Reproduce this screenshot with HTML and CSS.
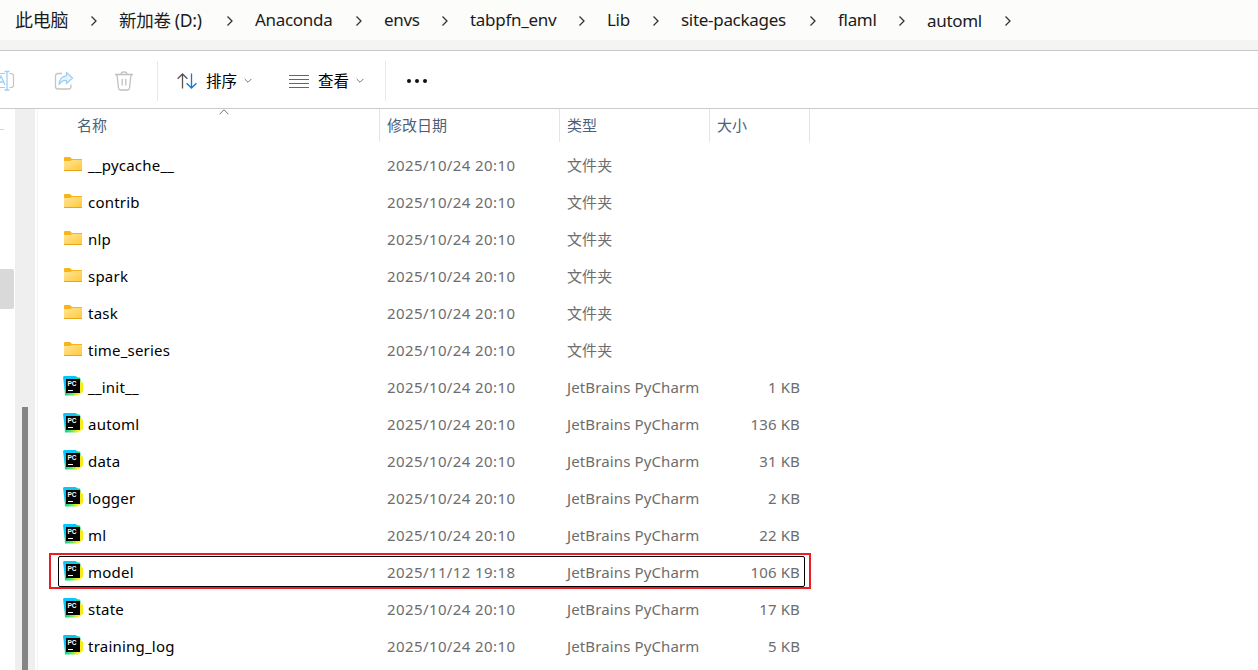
FILE: index.html
```html
<!DOCTYPE html>
<html lang="zh-CN">
<head>
    <meta charset="UTF-8">
    <title>automl</title>
    <link rel="stylesheet" href="styles.css">
</head>
<body>

<!-- 图标 -->
<svg class="sprite">
    <defs>
        <linearGradient id="folder-fill" x1="0" y1="0" x2="1" y2="1">
            <stop offset="0" stop-color="#ffe59b"/>
            <stop offset="1" stop-color="#ffc937"/>
        </linearGradient>
        <linearGradient id="pc-fill" x1="0" y1="1" x2="1" y2=".7">
            <stop offset=".1" stop-color="#10d98c"/>
            <stop offset=".4" stop-color="#6be860"/>
            <stop offset=".65" stop-color="#f6ee1c"/>
        </linearGradient>
    </defs>
    <symbol id="folder" viewBox="0 0 18 14">
        <path d="M0 1Q0 0 1 0H6L8 2H18V6H0Z" fill="#f9b517"/>
        <path d="M0 4H6.5L8 3H18V14H0Z" fill="url(#folder-fill)"/>
        <path d="M0 13.5H18" stroke="#e9a61c"/>
    </symbol>
    <symbol id="pycharm" viewBox="0 0 20 20">
        <path d="M0 1L1 0H12.500L17 3V12L4 17L1.500 13Z" fill="#0cc5f8"/>
        <path d="M12.500 1.500H17L18 6H12Z" fill="#12d99a"/>
        <path d="M1.500 12.500L2 19.500H15L20 16V7L17.500 5Z" fill="url(#pc-fill)"/>
        <path d="M3 3H17V17H3Z"/>
        <path d="M5 14.500H10" stroke="#fff"/>
    </symbol>
    <symbol id="chevron" viewBox="0 0 8 12">
        <path d="M1.500 1.500L6 6L1.500 10.500" fill="none" stroke="#333" stroke-width="1.300"/>
    </symbol>
    <symbol id="down" viewBox="0 0 8 6">
        <path d="M.7 1L4 4.300L7.300 1" fill="none" stroke="#777"/>
    </symbol>
</svg>

<div class="address">
    <span class="crumb c1">此电脑</span><svg class="sep"><use href="#chevron"/></svg>
    <span class="crumb c2">新加卷 (D:)</span><svg class="sep"><use href="#chevron"/></svg>
    <span class="crumb c3">Anaconda</span><svg class="sep"><use href="#chevron"/></svg>
    <span class="crumb c4">envs</span><svg class="sep"><use href="#chevron"/></svg>
    <span class="crumb c5">tabpfn_env</span><svg class="sep"><use href="#chevron"/></svg>
    <span class="crumb c6">Lib</span><svg class="sep"><use href="#chevron"/></svg>
    <span class="crumb c7">site-packages</span><svg class="sep"><use href="#chevron"/></svg>
    <span class="crumb c8">flaml</span><svg class="sep"><use href="#chevron"/></svg>
    <span class="crumb c9">automl</span><svg class="sep"><use href="#chevron"/></svg>
</div>

<div class="toolbar">
    <svg class="tool rename" width="15" height="22" viewBox="0 0 15 22" fill="none">
        <path d="M0 3.500H5M0 17.500H5M9.500 3.500H11Q13.500 3.500 13.500 6V15Q13.500 17.500 11 17.500H9.500" stroke="#c4c4c4" stroke-width="1.200"/>
        <path d="M7 1.500V20M4.500 1.500H9.500M4.500 20H9.500" stroke="#9fd0f3" stroke-width="1.300"/>
        <path d="M-3 15L1 6L5 15M-1 12H4" stroke="#9fd0f3" stroke-width="1.300"/>
    </svg>
    <svg class="tool share" width="20" height="20" viewBox="0 0 20 20" fill="none">
        <path d="M8 2.500H4Q1.500 2.500 1.500 5V15.500Q1.500 18 4 18H14.500Q17 18 17 15.500V13.500" stroke="#c4c4c4" stroke-width="1.300"/>
        <path d="M12.500 1.500L18.500 7L12.500 12.500V9.500Q8 9 5 13.500Q5.500 5.500 12.500 4.800Z" fill="#e8f4fd" stroke="#9fcdf0" stroke-width="1.200" stroke-linejoin="round"/>
    </svg>
    <svg class="tool trash" width="18" height="20" viewBox="0 0 18 20" fill="none" stroke="#c0c0c0" stroke-width="1.300">
        <path d="M0 3.500H18M6 3.500Q6 .8 9 .8T12 3.500M2 3.500L3.500 17Q3.700 19 5.500 19H12.500Q14.300 19 14.500 17L16 3.500M7.200 8V14.500M10.800 8V14.500"/>
    </svg>
    <div class="split"></div>
    <div class="button sort">
        <svg width="20" height="16" viewBox="0 0 20 16" fill="none" stroke-width="1.300">
            <path d="M5.500 15.500V1M.6 5.800L5.500 1L10.400 5.800" stroke="#555"/>
            <path d="M14.500 .5V15M9.600 10.200L14.500 15L19.400 10.200" stroke="#1279cf"/>
        </svg>
        <span>排序</span>
        <svg class="down"><use href="#down"/></svg>
    </div>
    <div class="button view">
        <svg width="20" height="14" viewBox="0 0 20 14" fill="none" stroke="#666">
            <path d="M0 1.500H20M0 5.500H20M0 9.500H20M0 13.500H20"/>
        </svg>
        <span>查看</span>
        <svg class="down"><use href="#down"/></svg>
    </div>
    <div class="split"></div>
    <div class="more"><i></i><i></i><i></i></div>
</div>

<div class="main">
    <div class="nav">
        <div class="nav-line"></div>
        <div class="nav-item"></div>
    </div>
    <div class="scroll"><div class="thumb"></div></div>
    <div class="files">
        <div class="head">
            <div class="name">名称<svg class="asc" width="10" height="6" viewBox="0 0 10 6"><path d="M.5 5.300L5 .8L9.500 5.300" fill="none" stroke="#777"/></svg></div>
            <div class="date">修改日期</div>
            <div class="type">类型</div>
            <div class="size">大小</div>
        </div>
        <div class="row"><div class="name"><svg class="folder"><use href="#folder"/></svg><span>__pycache__</span></div><div class="date">2025/10/24 20:10</div><div class="type">文件夹</div><div class="size"></div></div>
        <div class="row"><div class="name"><svg class="folder"><use href="#folder"/></svg><span>contrib</span></div><div class="date">2025/10/24 20:10</div><div class="type">文件夹</div><div class="size"></div></div>
        <div class="row"><div class="name"><svg class="folder"><use href="#folder"/></svg><span>nlp</span></div><div class="date">2025/10/24 20:10</div><div class="type">文件夹</div><div class="size"></div></div>
        <div class="row"><div class="name"><svg class="folder"><use href="#folder"/></svg><span>spark</span></div><div class="date">2025/10/24 20:10</div><div class="type">文件夹</div><div class="size"></div></div>
        <div class="row"><div class="name"><svg class="folder"><use href="#folder"/></svg><span>task</span></div><div class="date">2025/10/24 20:10</div><div class="type">文件夹</div><div class="size"></div></div>
        <div class="row"><div class="name"><svg class="folder"><use href="#folder"/></svg><span>time_series</span></div><div class="date">2025/10/24 20:10</div><div class="type">文件夹</div><div class="size"></div></div>
        <div class="row"><div class="name"><svg class="py"><use href="#pycharm"/><text x="4.500" y="10">PC</text></svg><span>__init__</span></div><div class="date">2025/10/24 20:10</div><div class="type">JetBrains PyCharm</div><div class="size">1 KB</div></div>
        <div class="row"><div class="name"><svg class="py"><use href="#pycharm"/><text x="4.500" y="10">PC</text></svg><span>automl</span></div><div class="date">2025/10/24 20:10</div><div class="type">JetBrains PyCharm</div><div class="size">136 KB</div></div>
        <div class="row"><div class="name"><svg class="py"><use href="#pycharm"/><text x="4.500" y="10">PC</text></svg><span>data</span></div><div class="date">2025/10/24 20:10</div><div class="type">JetBrains PyCharm</div><div class="size">31 KB</div></div>
        <div class="row"><div class="name"><svg class="py"><use href="#pycharm"/><text x="4.500" y="10">PC</text></svg><span>logger</span></div><div class="date">2025/10/24 20:10</div><div class="type">JetBrains PyCharm</div><div class="size">2 KB</div></div>
        <div class="row"><div class="name"><svg class="py"><use href="#pycharm"/><text x="4.500" y="10">PC</text></svg><span>ml</span></div><div class="date">2025/10/24 20:10</div><div class="type">JetBrains PyCharm</div><div class="size">22 KB</div></div>
        <div class="row active"><div class="name"><svg class="py"><use href="#pycharm"/><text x="4.500" y="10">PC</text></svg><span>model</span></div><div class="date">2025/11/12 19:18</div><div class="type">JetBrains PyCharm</div><div class="size">106 KB</div></div>
        <div class="row"><div class="name"><svg class="py"><use href="#pycharm"/><text x="4.500" y="10">PC</text></svg><span>state</span></div><div class="date">2025/10/24 20:10</div><div class="type">JetBrains PyCharm</div><div class="size">17 KB</div></div>
        <div class="row"><div class="name"><svg class="py"><use href="#pycharm"/><text x="4.500" y="10">PC</text></svg><span>training_log</span></div><div class="date">2025/10/24 20:10</div><div class="type">JetBrains PyCharm</div><div class="size">5 KB</div></div>
    </div>
</div>

</body>
</html>
```
FILE: styles.css
```css
*,
*::before,
*::after {
    box-sizing: border-box;
}

body {
    margin: 0;
    height: 670px;
    overflow: hidden;
    display: flex;
    flex-direction: column;
    background: #fff;
    color: #000;
    font: 15px/20px "Noto Sans", "Noto Sans CJK SC", sans-serif;
}

svg {
    flex: none;
    display: block;
}

.sprite {
    position: absolute;
    width: 0;
    height: 0;
}

/* 地址栏 */
.address {
    flex: none;
    display: flex;
    align-items: center;
    height: 51px;
    padding: 0 0 10px 15px;
    border-bottom: 1px solid #cbc9c6;
    background: linear-gradient(#fcfcfa 40px, #f4f4f2 40px);
    color: #1b1b1b;
    font-size: 17px;
    white-space: nowrap;
}

.crumb {
    flex: none;
    letter-spacing: -.3px;
}

.c1 { width: 53px; font-size: 18px; }
.c2 { width: 85px; font-size: 17.5px; }
.c3 { width: 78px; }
.c4 { width: 35px; }
.c5 { width: 86px; }
.c6 { width: 23px; }
.c7 { width: 106px; }
.c8 { width: 38px; }
.c9 { width: 55px; padding-top: 1px; }

.sep {
    width: 8px;
    height: 12px;
    margin: 1px 21px 0 22px;
}

/* 工具栏 */
.toolbar {
    flex: none;
    display: flex;
    align-items: center;
    height: 58px;
    padding-top: 2px;
    border-bottom: 1px solid #cbcbcb;
}

.share {
    margin-left: 39px;
}

.trash {
    margin-left: 41px;
}

.split {
    width: 1px;
    height: 40px;
    margin-left: 24px;
    background: #e8e8e8;
}

.button {
    display: flex;
    align-items: center;
    margin-left: 19px;
}

.button span {
    width: 31px;
    margin: 0 7px 0 9px;
    font-size: 15.5px;
}

.button.view {
    margin-left: 37px;
}

.down {
    width: 8px;
    height: 6px;
}

.view + .split {
    margin-left: 21px;
}

.more {
    display: flex;
    gap: 4px;
    margin-left: 21px;
}

.more i {
    width: 4px;
    height: 4px;
    border-radius: 50%;
    background: #111;
}

/* 内容 */
.main {
    flex: 1;
    display: flex;
    min-height: 0;
}

.nav {
    width: 15px;
    padding-top: 20px;
}

.nav-line {
    width: 4px;
    height: 1px;
    background: #d5d5d5;
}

.nav-item {
    width: 14px;
    height: 40px;
    margin-top: 139px;
    border-radius: 0 2px 2px 0;
    background: #d9d9d9;
}

.scroll {
    width: 20px;
    padding: 298px 7px 0;
    background: #efefef;
}

.thumb {
    height: 263px;
    background: #858585;
}

.files {
    width: 773px;
    margin-left: 2px;
    border-left: 1px solid #f3f3f3;
}

.head,
.row {
    display: grid;
    grid-template-columns: 342px 180px 150px 100px;
}

.head {
    height: 33px;
    margin-bottom: 4px;
    color: #4c607a;
    line-height: 33px;
}

.head div {
    padding-left: 7px;
    border-right: 1px solid #e5e5e5;
}

.head .name {
    display: flex;
    padding-left: 39px;
}

.asc {
    margin: 0 0 0 112px;
}

.row {
    position: relative;
    align-items: center;
    height: 37px;
    color: #6d6d6d;
    letter-spacing: .12px;
}

.row .name {
    display: flex;
    align-items: center;
    color: #000;
    letter-spacing: .22px;
}

.row .date,
.row .type {
    padding-left: 7px;
}

.row .date {
    letter-spacing: .4px;
}

.row .size {
    padding-right: 10px;
    text-align: right;
}

.folder {
    width: 18px;
    height: 14px;
    margin: 0 6px 1px 26px;
}

.py {
    width: 20px;
    height: 20px;
    margin: 0 5px 1px 25px;
}

.py text {
    fill: #fff;
    font: bold 6.5px "Liberation Sans", sans-serif;
    letter-spacing: 0;
}

/* 选中的文件 */
.active::before {
    content: '';
    position: absolute;
    left: 11px;
    top: 0;
    width: 762px;
    height: 36px;
    border: 2px solid #ed1c24;
}

.active::after {
    content: '';
    position: absolute;
    left: 20px;
    top: 3px;
    width: 747px;
    height: 31px;
    border: 1px solid #000;
    border-radius: 2px;
}
```
